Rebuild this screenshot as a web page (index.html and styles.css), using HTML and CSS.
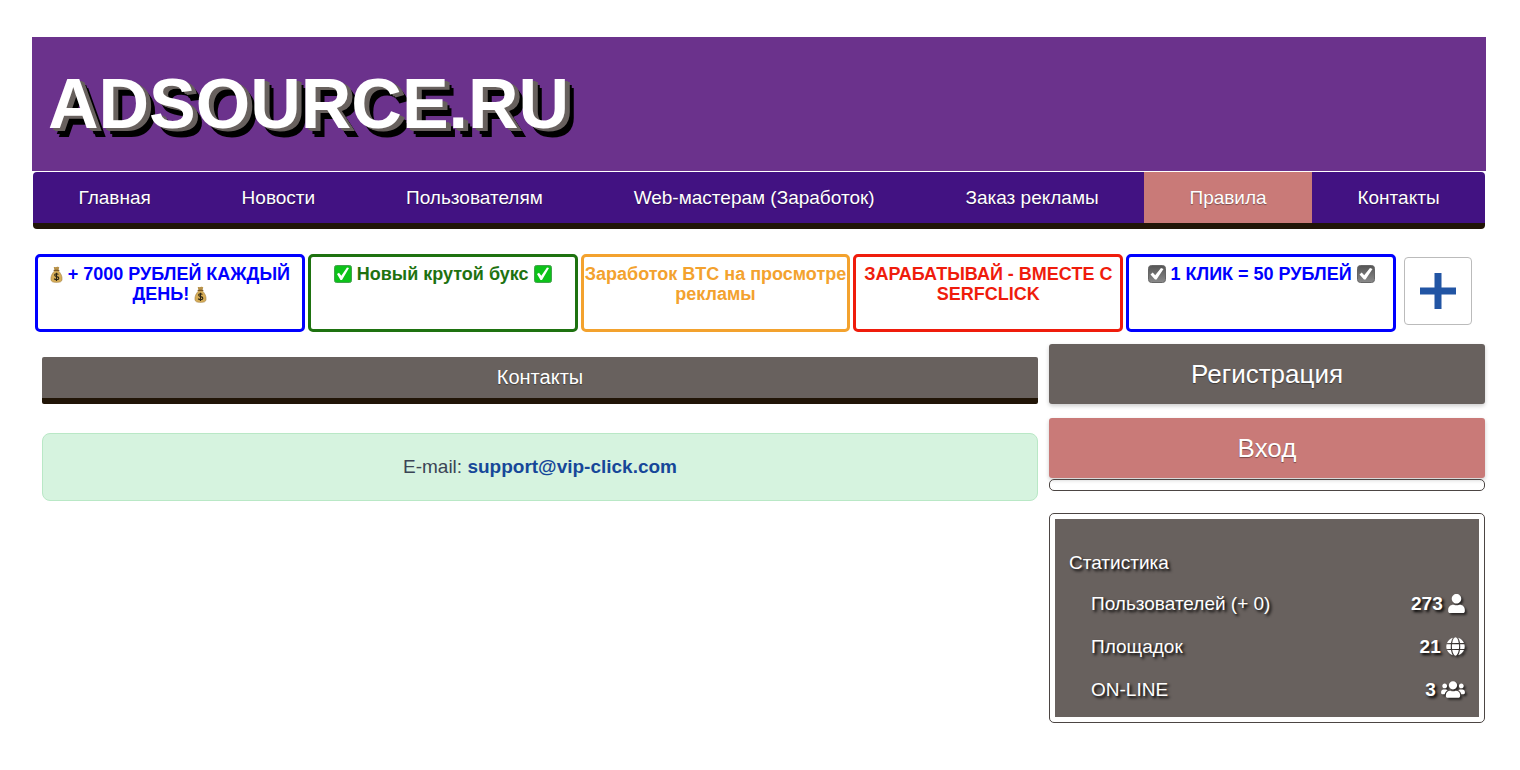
FILE: index.html
```html
<!DOCTYPE html>
<html lang="ru">
<head>
<meta charset="utf-8">
<title>ADSOURCE.RU</title>
<link rel="stylesheet" href="styles.css">
</head>
<body>
<svg class="sprite" aria-hidden="true">
  <symbol id="bag" viewBox="0 0 28 36">
    <path d="M8 3c1-2 4 0 6-1s5-1 6 1l-2 6h-8z" fill="#b8924a"/>
    <path d="M10 10h8c5 5 9 12 8 19-1 5-4 6-12 6S3 34 2 29C1 22 5 15 10 10z" fill="#d6ad58" stroke="#94713a" stroke-width="1"/>
    <path d="M9 9h10" stroke="#7d5a26" stroke-width="3" stroke-linecap="round"/>
    <path d="M18 18c-1-2-8-3-8 1 0 5 9 2 9 7 0 4-8 4-10 1M14 14v18" fill="none" stroke="#2b2413" stroke-width="2.400"/>
  </symbol>
  <symbol id="check-green" viewBox="0 0 18 18">
    <rect x=".5" y=".5" width="17" height="17" rx="2" fill="#0cc21a" stroke="#45a04e"/>
    <path d="M3 9l2-1.200 2.300 3L13 2.500l2 .6-7 11.900h-1.500z" fill="#fff"/>
  </symbol>
  <symbol id="check-gray" viewBox="0 0 18 18">
    <linearGradient id="steel" x1="0" y1="0" x2="0" y2="1">
      <stop offset="0" stop-color="#555"/>
      <stop offset="1" stop-color="#8a8a8a"/>
    </linearGradient>
    <rect x=".5" y=".5" width="17" height="17" rx="3" fill="url(#steel)" stroke="#666"/>
    <path d="M2.500 9.500l2.200-2 2.500 2.700L13 3l2.500 1-7 10.500H7z" fill="#fff"/>
  </symbol>
</svg>
<div class="page">
  <header class="banner"><h1 class="logo">ADSOURCE.RU</h1></header>
  <nav class="menu">
    <a href="#">Главная</a>
    <a href="#">Новости</a>
    <a href="#">Пользователям</a>
    <a href="#">Web-мастерам (Заработок)</a>
    <a href="#">Заказ рекламы</a>
    <a href="#" class="current">Правила</a>
    <a href="#">Контакты</a>
  </nav>
  <section class="ads">
    <a href="#" class="ad blue"><svg class="emoji bag"><use href="#bag"/></svg> + 7000 РУБЛЕЙ КАЖДЫЙ ДЕНЬ! <svg class="emoji bag"><use href="#bag"/></svg></a>
    <a href="#" class="ad green"><svg class="emoji"><use href="#check-green"/></svg> Новый крутой букс <svg class="emoji"><use href="#check-green"/></svg></a>
    <a href="#" class="ad orange">Заработок BTC на просмотре рекламы</a>
    <a href="#" class="ad red">ЗАРАБАТЫВАЙ - ВМЕСТЕ С SERFCLICK</a>
    <a href="#" class="ad blue"><svg class="emoji"><use href="#check-gray"/></svg> 1 КЛИК = 50 РУБЛЕЙ <svg class="emoji"><use href="#check-gray"/></svg></a>
    <button class="add" aria-label="Добавить"><svg viewBox="0 0 36 36"><path d="M18 0v36M0 18h36" stroke="#2255a4" stroke-width="7"/></svg></button>
  </section>
  <div class="columns">
    <main class="content">
      <h2 class="heading">Контакты</h2>
      <p class="notice">E-mail: <a href="#">support@vip-click.com</a></p>
    </main>
    <aside class="side">
      <button class="action">Регистрация</button>
      <button class="action login">Вход</button>
      <div class="strip"></div>
      <section class="stats">
        <div class="panel">
          <h3>Статистика</h3>
          <dl>
            <div><dt>Пользователей (+ 0)</dt><dd>273 <svg class="user" viewBox="0 0 448 512"><path d="M224 256c70.700 0 128-57.300 128-128S294.700 0 224 0 96 57.300 96 128s57.300 128 128 128zm89.600 32h-16.700c-22.200 10.200-46.900 16-72.900 16s-50.600-5.800-72.900-16h-16.700C60.200 288 0 348.200 0 422.400V464c0 26.500 21.500 48 48 48h352c26.500 0 48-21.500 48-48v-41.600c0-74.200-60.200-134.400-134.400-134.400z"/></svg></dd></div>
            <div><dt>Площадок</dt><dd>21 <svg class="globe" viewBox="0 0 496 512"><path d="M336.500 160C322 70.700 287.800 8 248 8s-74 62.700-88.500 152h177zM152 256c0 22.200 1.200 43.500 3.300 64h185.300c2.100-20.500 3.300-41.800 3.300-64s-1.200-43.500-3.300-64H155.300c-2.100 20.500-3.300 41.800-3.300 64zm324.700-96c-28.600-67.900-86.500-120.400-158-141.600 24.400 33.800 41.200 84.700 50 141.600h108zM177.200 18.400C105.800 39.600 47.800 92.100 19.300 160h108c8.700-56.900 25.500-107.800 49.900-141.600zM487.400 192H372.700c2.100 21 3.300 42.500 3.300 64s-1.200 43-3.300 64h114.600c5.500-20.500 8.600-41.800 8.600-64s-3.100-43.500-8.500-64zM120 256c0-21.500 1.200-43 3.300-64H8.600C3.200 212.500 0 233.800 0 256s3.200 43.500 8.600 64h114.600c-2-21-3.200-42.500-3.200-64zm39.500 96c14.500 89.300 48.700 152 88.500 152s74-62.700 88.500-152h-177zm159.300 141.600c71.400-21.200 129.400-73.700 158-141.600h-108c-8.800 56.900-25.600 107.800-50 141.600zM19.300 352c28.600 67.900 86.500 120.400 158 141.600-24.400-33.800-41.200-84.700-50-141.600h-108z"/></svg></dd></div>
            <div><dt>ON-LINE</dt><dd>3 <svg class="users" viewBox="0 0 640 512"><path d="M96 224c35.300 0 64-28.700 64-64s-28.700-64-64-64-64 28.700-64 64 28.700 64 64 64zm448 0c35.300 0 64-28.700 64-64s-28.700-64-64-64-64 28.700-64 64 28.700 64 64 64zm32 32h-64c-17.600 0-33.500 7.100-45.100 18.600 40.300 22.100 68.900 62 75.100 109.400h66c17.700 0 32-14.300 32-32v-32c0-35.300-28.700-64-64-64zm-256 0c61.900 0 112-50.100 112-112S381.900 32 320 32 208 82.100 208 144s50.100 112 112 112zm76.800 32h-8.300c-20.800 10-43.900 16-68.500 16s-47.600-6-68.500-16h-8.300C179.600 288 128 339.600 128 403.200V432c0 26.500 21.500 48 48 48h288c26.500 0 48-21.500 48-48v-28.800c0-63.600-51.600-115.200-115.200-115.200zm-223.700-13.400C161.500 263.100 145.600 256 128 256H64c-35.300 0-64 28.700-64 64v32c0 17.700 14.300 32 32 32h65.900c6.300-47.400 34.900-87.300 75.200-109.400z"/></svg></dd></div>
          </dl>
        </div>
      </section>
    </aside>
  </div>
</div>
</body>
</html>
```
FILE: styles.css
```css
* { box-sizing: border-box; }
body {
  margin: 0;
  background: #fff;
  font-family: "Liberation Sans", Arial, sans-serif;
  font-size: 19px;
}
h1, h2, h3, p, dl, dt, dd { margin: 0; font-weight: normal; }
a { text-decoration: none; }
button { font-family: inherit; cursor: pointer; }
.sprite { position: absolute; width: 0; height: 0; }
.page { padding: 37px 34px 0 32px; }
.banner {
  padding: 28px 16px;
  background: #6b328c;
}
.logo {
  color: #fff;
  font-size: 70px;
  font-weight: bold;
  line-height: 78px;
  text-shadow: 3px 2px 0 #68615e, 5px 3px 0 #68615e, 7px 6px 0 #000, 9px 9px 0 #000;
}
.menu {
  display: flex;
  margin: 1px 1px 0;
  background: #421282;
  border-bottom: 6px solid #211507;
  border-radius: 4px;
}
.menu a {
  flex: 1 1 auto;
  color: #fff;
  line-height: 51px;
  text-align: center;
  text-shadow: 0 1px 1px #0006;
}
.menu .current { background: #c97a78; }
.ads {
  display: flex;
  gap: 3px;
  margin: 25px 14px 0 3px;
}
.ad {
  flex: 1 1 0;
  height: 78px;
  padding-top: 7px;
  border: 3px solid;
  border-radius: 5px;
  font-size: 18px;
  font-weight: bold;
  line-height: 20px;
  text-align: center;
}
.blue { color: #00f; }
.green { color: #1e7210; }
.orange { color: #f3a22e; }
.red { color: #ef1c0c; }
.emoji { width: 18px; height: 18px; vertical-align: -3px; }
.bag { width: 13px; height: 17px; }
.add {
  display: grid;
  place-items: center;
  width: 68px;
  height: 68px;
  margin: 3px 0 0 5px;
  padding: 0;
  background: #fff;
  border: 1px solid #bbb;
  border-radius: 4px;
}
.add svg { width: 36px; height: 36px; }
.columns {
  display: grid;
  grid-template-columns: 1006fr 436fr;
  gap: 11px;
  margin-right: 1px;
}
.content { padding: 25px 0 0 10px; }
.heading {
  color: #fff;
  background: #68615e;
  border-bottom: 6px solid #211507;
  border-radius: 2px;
  font-size: 20px;
  line-height: 41px;
  text-align: center;
  text-shadow: 0 1px 1px #0006;
}
.notice {
  margin-top: 29px;
  padding: 21px;
  color: #3b4455;
  background: #d6f3df;
  border: 1px solid #b9e8c6;
  border-radius: 8px;
  line-height: 24px;
  text-align: center;
}
.notice a { color: #164799; font-weight: bold; }
.side { padding-top: 12px; }
.action {
  display: block;
  width: 100%;
  height: 60px;
  padding: 0;
  color: #fff;
  background: #68615e;
  border: 0;
  border-radius: 3px;
  box-shadow: 0 2px 4px #0003;
  font-size: 26px;
  text-shadow: 0 1px 1px #0006;
}
.login { margin-top: 14px; background: #c97a78; }
.strip {
  height: 12px;
  margin-top: 1px;
  border: 1px solid #4c4543;
  border-radius: 5px;
}
.stats {
  margin-top: 22px;
  padding: 5px;
  border: 1px solid #4c4543;
  border-radius: 5px;
}
.panel {
  padding: 33px 14px 6px;
  color: #fff;
  background: #68615e;
  text-shadow: 2px 2px 3px #000;
}
.panel h3 { font-size: 19px; line-height: 22px; }
.panel dl { margin-top: 8px; padding-left: 22px; }
.panel dl div {
  display: flex;
  justify-content: space-between;
  line-height: 43px;
}
.panel dd { font-weight: bold; }
.panel svg {
  height: 19px;
  fill: #fff;
  vertical-align: -3px;
  filter: drop-shadow(2px 2px 1px #0009);
}
.user { width: 17px; }
.globe { width: 19px; }
.users { width: 24px; }
```
